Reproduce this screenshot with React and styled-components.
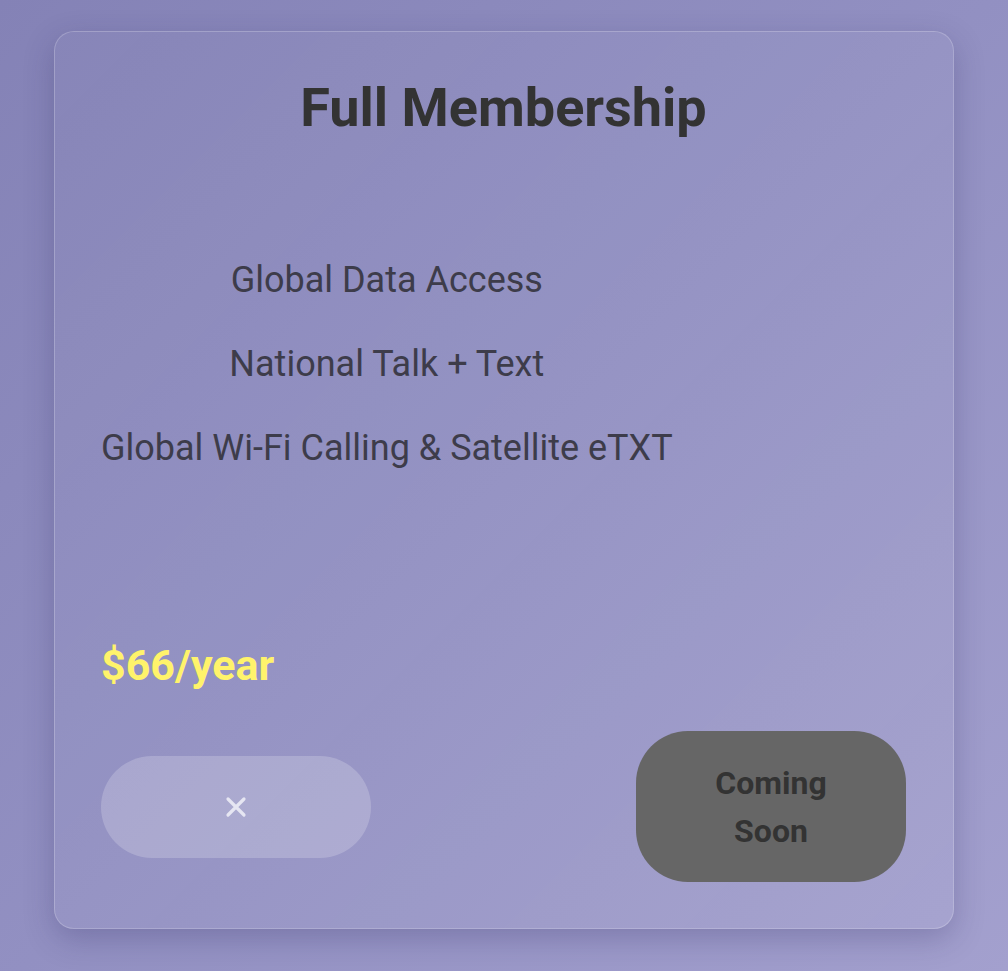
import React from 'react'
import styled, { createGlobalStyle } from 'styled-components'

const GlobalStyle = createGlobalStyle`
  html, body {
    margin: 0;
    padding: 0;
  }
  body {
    min-height: 971px;
    background: linear-gradient(135deg, #8482b6 0%, #9290c2 50%, #a3a0ce 100%);
    font-family: Roboto, 'Noto Sans', sans-serif;
  }
`

const Page = styled.div`
  padding: 31px 54px 42px;
`

const Card = styled.div`
  box-sizing: border-box;
  width: 900px;
  height: 898px;
  padding: 0 47px 46px 46px;
  border-radius: 20px;
  background: linear-gradient(135deg, rgba(255, 255, 255, 0.02), rgba(255, 255, 255, 0.06));
  border: 1.5px solid rgba(255, 255, 255, 0.2);
  box-shadow: 0 10px 30px rgba(40, 35, 90, 0.25);
  display: flex;
  flex-direction: column;
`

const Title = styled.h2`
  margin: 44px 0 0;
  text-align: center;
  font-size: 54px;
  font-weight: 700;
  line-height: 1.2;
  color: #333;
`

const Features = styled.ul`
  list-style: none;
  margin: 117px 0 0;
  padding: 0;
  align-self: flex-start;
  display: flex;
  flex-direction: column;
  align-items: center;
  gap: 40px;
`

const Feature = styled.li`
  font-size: 36px;
  line-height: 44px;
  color: #3d3c4a;
`

const Price = styled.div`
  margin-top: auto;
  font-size: 43px;
  font-weight: 700;
  line-height: 1.2;
  color: #fff36b;
`

const Actions = styled.div`
  margin-top: 39px;
  display: flex;
  justify-content: space-between;
  align-items: center;
`

const Button = styled.button`
  box-sizing: border-box;
  width: 270px;
  border: none;
  font-family: inherit;
  cursor: pointer;
`

const CloseButton = styled(Button)`
  height: 102px;
  border-radius: 51px;
  background: rgba(255, 255, 255, 0.2);
  display: flex;
  align-items: center;
  justify-content: center;
`

const SoonButton = styled(Button)`
  height: 151px;
  padding: 0 70px;
  border-radius: 52px;
  background: #666;
  color: #333;
  font-size: 32px;
  font-weight: 700;
  line-height: 48px;
`

function CloseIcon() {
  return (
    <svg width="22" height="22" viewBox="0 0 22 22" fill="none">
      <path d="M3 3 L19 19 M19 3 L3 19" stroke="#e6e6f2" strokeWidth="3.2" strokeLinecap="round" />
    </svg>
  )
}

export default function App() {
  return (
    <>
      <GlobalStyle />
      <Page>
        <Card>
          <Title>Full Membership</Title>
          <Features>
            <Feature>Global Data Access</Feature>
            <Feature>National Talk + Text</Feature>
            <Feature>Global Wi-Fi Calling &amp; Satellite eTXT</Feature>
          </Features>
          <Price>$66/year</Price>
          <Actions>
            <CloseButton aria-label="Close">
              <CloseIcon />
            </CloseButton>
            <SoonButton>Coming Soon</SoonButton>
          </Actions>
        </Card>
      </Page>
    </>
  )
}
